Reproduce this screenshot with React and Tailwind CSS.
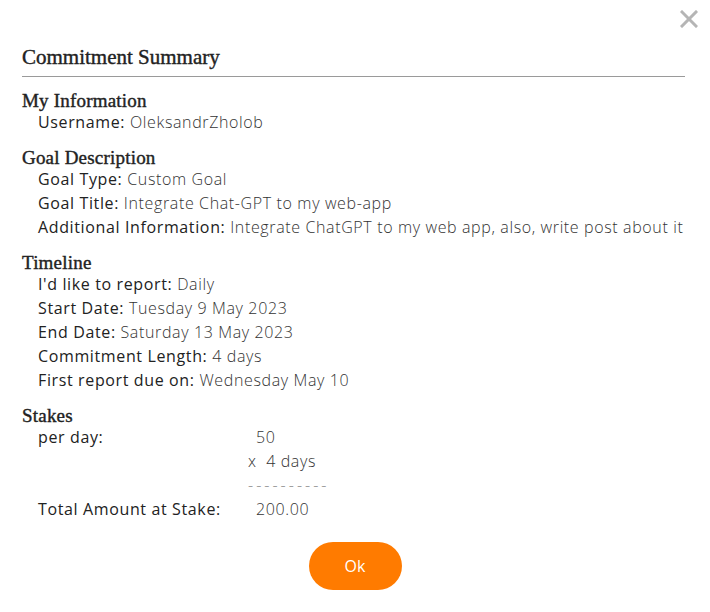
const serif = { fontFamily: '"Liberation Serif", "DejaVu Serif", serif' };

const Row = ({ label, value }) => (
  <div className="h-6 leading-6 whitespace-nowrap">
    <span className="text-[#222]">{label}</span>{' '}
    <span className="font-light text-[#333]">{value}</span>
  </div>
);

const Section = ({ title, children, className = '' }) => (
  <div className={className}>
    <h3
      className="text-[19px] leading-[18px] font-normal tracking-[0.2px] text-[#222] [-webkit-text-stroke:0.4px_#222]"
      style={serif}
    >
      {title}
    </h3>
    <div className="pl-4">{children}</div>
  </div>
);

export default function App() {
  return (
    <div className="w-[710px] h-[612px] bg-white relative font-['Open_Sans',sans-serif] text-[16px] tracking-[0.63px]">
      <button className="absolute right-[12px] top-[10px]">
        <svg width="18" height="18" viewBox="0 0 18 18" stroke="#b5b5b5" strokeWidth="3" strokeLinecap="square">
          <line x1="2" y1="2" x2="16" y2="16" />
          <line x1="16" y1="2" x2="2" y2="16" />
        </svg>
      </button>

      <div className="pl-[22px] pr-[25px] pt-[43px]">
        <h2
          className="text-[21px] leading-7 font-normal tracking-normal text-[#222] [-webkit-text-stroke:0.4px_#222] pb-[5px] border-b border-[#9a9a9a]"
          style={serif}
        >
          Commitment Summary
        </h2>

        <Section title="My Information" className="mt-[15px]">
          <Row label="Username:" value="OleksandrZholob" />
        </Section>

        <Section title="Goal Description" className="mt-[15px]">
          <Row label="Goal Type:" value="Custom Goal" />
          <Row label="Goal Title:" value="Integrate Chat-GPT to my web-app" />
          <Row label="Additional Information:" value="Integrate ChatGPT to my web app, also, write post about it" />
        </Section>

        <Section title="Timeline" className="mt-[15px]">
          <Row label="I'd like to report:" value="Daily" />
          <Row label="Start Date:" value="Tuesday 9 May 2023" />
          <Row label="End Date:" value="Saturday 13 May 2023" />
          <Row label="Commitment Length:" value="4 days" />
          <Row label="First report due on:" value="Wednesday May 10" />
        </Section>

        <Section title="Stakes" className="mt-[15px]">
          <div className="grid grid-cols-[210px_1fr] leading-6 font-light text-[#333]">
            <div className="font-normal text-[#222]">per day:</div>
            <div className="pl-2">50</div>
            <div />
            <div>x&nbsp;&nbsp;4 days</div>
            <div />
            <div className="text-[#8a8a8a] tracking-[3px]">----------</div>
            <div className="font-normal text-[#222]">Total Amount at Stake:</div>
            <div className="pl-2">200.00</div>
          </div>
        </Section>

        <div className="flex justify-center mt-[21px] pl-[3px]">
          <button className="w-[93px] h-12 rounded-full bg-[#ff7b00] text-white text-[16px] font-normal tracking-normal">Ok</button>
        </div>
      </div>
    </div>
  );
}
